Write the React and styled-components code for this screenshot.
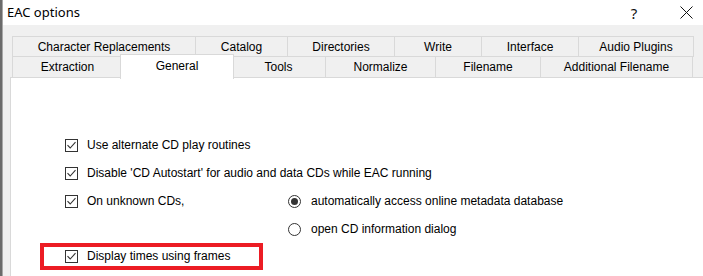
import React from "react";
import styled, { createGlobalStyle } from "styled-components";

const GlobalStyle = createGlobalStyle`
  html, body {
    margin: 0;
    padding: 0;
    background: #6b6b6b;
    overflow: hidden;
  }
  * {
    box-sizing: border-box;
  }
`;

const row1 = [
  ["Character Replacements", 183],
  ["Catalog", 92],
  ["Directories", 107],
  ["Write", 87],
  ["Interface", 97],
  ["Audio Plugins", 115],
];

const row2 = [
  ["Extraction", 110],
  ["General", 110, true],
  ["Tools", 94],
  ["Normalize", 110],
  ["Filename", 105],
  ["Additional Filename", 152],
];

const Window = styled.div`
  margin-left: 2px;
  width: 701px;
  height: 276px;
  background: #f0f0f0;
  border-left: 1px solid #a8a8a8;
  font-family: "Liberation Sans", Arial, sans-serif;
  font-size: 12px;
  color: #000;
  display: flex;
  flex-direction: column;
`;

const TitleBar = styled.div`
  height: 25px;
  background: #fff;
  display: flex;
  align-items: center;
  padding-left: 4px;
  flex-shrink: 0;
`;

const Title = styled.div`
  flex: 1;
  font-family: "Noto Sans", "Open Sans", sans-serif;
  font-size: 13px;
  padding-bottom: 2px;
`;

const TitleButton = styled.div`
  width: ${(p) => p.$w}px;
  height: 25px;
  display: flex;
  align-items: center;
  justify-content: center;
  font-family: "Noto Sans", sans-serif;
  font-size: 15px;
  color: #111;
`;

const Body = styled.div`
  flex: 1;
  padding: 11px 0 0 7px;
  display: flex;
  flex-direction: column;
`;

const TabRow = styled.div`
  display: flex;
  padding-left: 2px;
  margin-top: ${(p) => (p.$second ? -1 : 0)}px;
  position: relative;
  z-index: ${(p) => (p.$second ? 2 : 1)};
`;

const Tab = styled.div`
  width: ${(p) => p.$w + (p.$active ? 4 : 1)}px;
  height: ${(p) => (p.$active ? 25 : p.$h)}px;
  margin: ${(p) => (p.$active ? "-2px -3px -1px -2px" : "0 -1px 0 0")};
  border: 1px solid #d9d9d9;
  border-bottom: ${(p) => (p.$active ? "none" : "1px solid #d9d9d9")};
  background: ${(p) => (p.$active ? "#fff" : "#f0f0f0")};
  position: relative;
  z-index: ${(p) => (p.$active ? 3 : 1)};
  display: flex;
  align-items: center;
  justify-content: center;
  padding-bottom: ${(p) => (p.$active ? 3 : 0)}px;
  white-space: nowrap;
`;

const Panel = styled.div`
  margin-top: -1px;
  flex: 1;
  background: #fff;
  border: 1px solid #d9d9d9;
  border-bottom: none;
  border-right: none;
  padding: 53px 0 0 54px;
  display: grid;
  grid-template-columns: 223px auto;
  grid-auto-rows: 28px;
  align-items: center;
`;

const Option = styled.label`
  display: flex;
  align-items: center;
  gap: ${(p) => (p.$radio ? 10 : 9)}px;
  grid-column: ${(p) => p.$col || "auto"};
  white-space: nowrap;
`;

const Highlight = styled.div`
  grid-column: 1 / span 2;
  width: 223px;
  height: 27px;
  margin: -2px 0 0 -25px;
  border: 4px solid #ec1c24;
  padding-left: 21px;
  display: flex;
  align-items: center;
  gap: 9px;
  white-space: nowrap;
`;

const Box = styled.span`
  width: 13px;
  height: 13px;
  border: 1px solid #333;
  background: #fff;
  display: flex;
  align-items: center;
  justify-content: center;
  flex-shrink: 0;
`;

const Radio = styled.span`
  width: 13px;
  height: 13px;
  border: 1px solid #333;
  border-radius: 50%;
  background: #fff;
  display: flex;
  align-items: center;
  justify-content: center;
  flex-shrink: 0;
  &::after {
    content: "";
    width: 7px;
    height: 7px;
    border-radius: 50%;
    background: ${(p) => (p.$checked ? "#333" : "transparent")};
  }
`;

const Check = () => (
  <Box>
    <svg width="11" height="11" viewBox="0 0 11 11">
      <path d="M1.5 5.2 L4.2 8 L9.5 2.2" fill="none" stroke="#333" strokeWidth="1.1" />
    </svg>
  </Box>
);

const CheckOption = ({ children }) => (
  <Option $col="1">
    <Check />
    <span>{children}</span>
  </Option>
);

const RadioOption = ({ checked, children }) => (
  <Option $radio $col="2">
    <Radio $checked={checked} />
    <span>{children}</span>
  </Option>
);

export default function App() {
  return (
    <>
      <GlobalStyle />
      <Window>
        <TitleBar>
          <Title>EAC options</Title>
          <TitleButton $w={70}>?</TitleButton>
          <TitleButton $w={34}>
            <svg width="13" height="13" viewBox="0 0 13 13">
              <path d="M0.5 0.5 L12.5 12.5 M12.5 0.5 L0.5 12.5" stroke="#111" strokeWidth="1" />
            </svg>
          </TitleButton>
        </TitleBar>
        <Body>
          <TabRow>
            {row1.map(([label, w]) => (
              <Tab key={label} $w={w} $h={21}>
                {label}
              </Tab>
            ))}
          </TabRow>
          <TabRow $second>
            {row2.map(([label, w, active]) => (
              <Tab key={label} $w={w} $h={22} $active={active}>
                {label}
              </Tab>
            ))}
          </TabRow>
          <Panel>
            <CheckOption>Use alternate CD play routines</CheckOption>
            <span />
            <Option $col="1 / span 2">
              <Check />
              <span>Disable 'CD Autostart' for audio and data CDs while EAC running</span>
            </Option>
            <CheckOption>On unknown CDs,</CheckOption>
            <RadioOption checked>automatically access online metadata database</RadioOption>
            <RadioOption>open CD information dialog</RadioOption>
            <Highlight>
              <Check />
              <span>Display times using frames</span>
            </Highlight>
          </Panel>
        </Body>
      </Window>
    </>
  );
}
